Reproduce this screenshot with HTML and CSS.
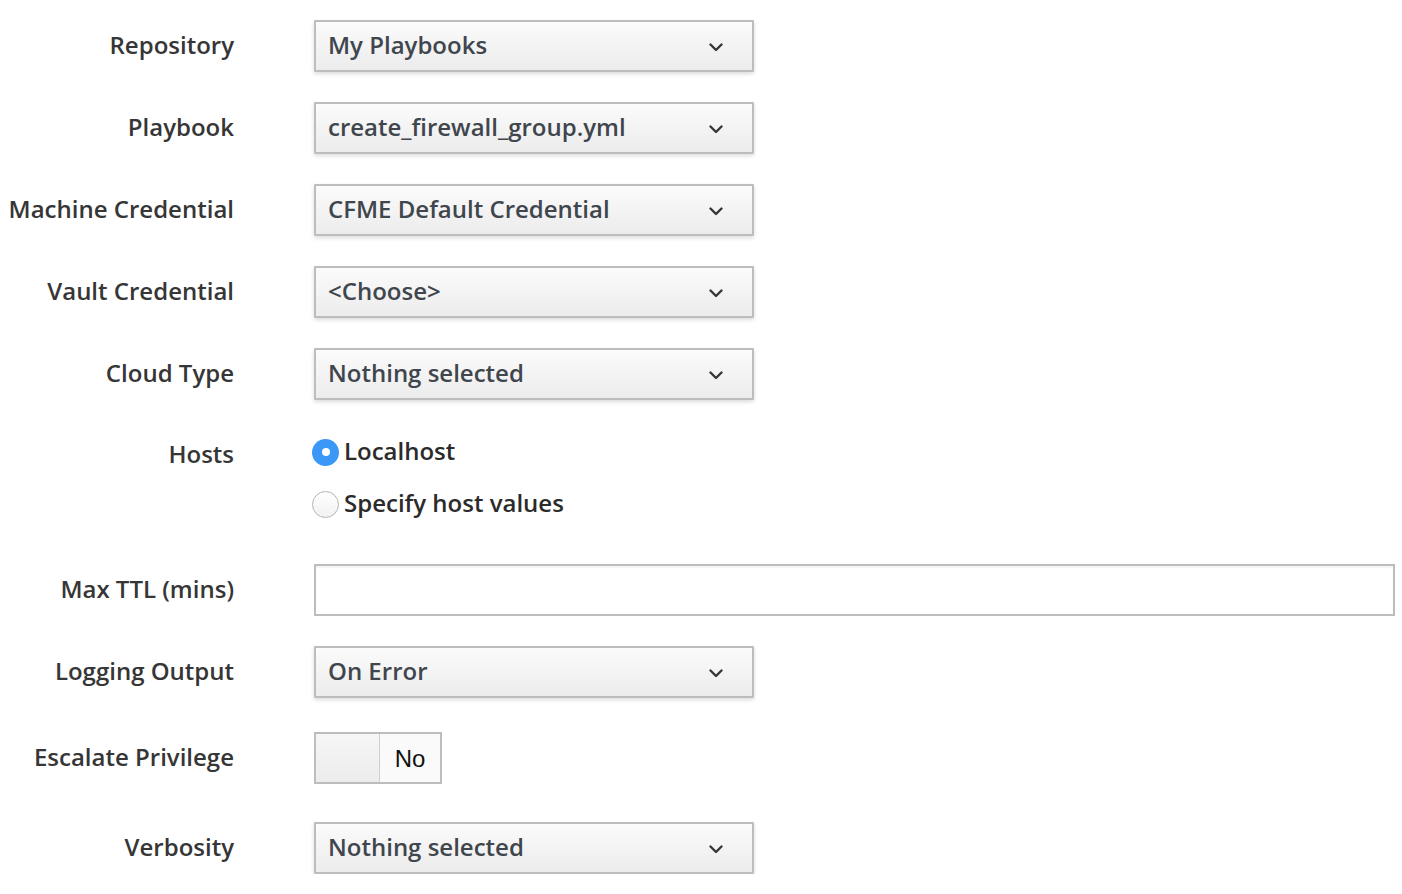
FILE: index.html
```html
<!DOCTYPE html>
<html>
<head>
<meta charset="utf-8">
<link rel="stylesheet" href="styles.css">
</head>
<body>
<form class="form">
  <div class="row">
    <label class="label">Repository</label>
    <div class="select"><span>My Playbooks</span><svg class="chev" viewBox="0 0 14 9"><path d="M1.5 1.5 L7 7 L12.5 1.5"/></svg></div>
  </div>
  <div class="row">
    <label class="label">Playbook</label>
    <div class="select"><span>create_firewall_group.yml</span><svg class="chev" viewBox="0 0 14 9"><path d="M1.5 1.5 L7 7 L12.5 1.5"/></svg></div>
  </div>
  <div class="row">
    <label class="label">Machine Credential</label>
    <div class="select"><span>CFME Default Credential</span><svg class="chev" viewBox="0 0 14 9"><path d="M1.5 1.5 L7 7 L12.5 1.5"/></svg></div>
  </div>
  <div class="row">
    <label class="label">Vault Credential</label>
    <div class="select"><span>&lt;Choose&gt;</span><svg class="chev" viewBox="0 0 14 9"><path d="M1.5 1.5 L7 7 L12.5 1.5"/></svg></div>
  </div>
  <div class="row">
    <label class="label">Cloud Type</label>
    <div class="select"><span>Nothing selected</span><svg class="chev" viewBox="0 0 14 9"><path d="M1.5 1.5 L7 7 L12.5 1.5"/></svg></div>
  </div>
  <div class="row row-hosts">
    <label class="label label-hosts">Hosts</label>
    <div class="radios">
      <div class="radio-line"><span class="radio checked"></span><span>Localhost</span></div>
      <div class="radio-line"><span class="radio"></span><span>Specify host values</span></div>
    </div>
  </div>
  <div class="row row-ttl">
    <label class="label">Max TTL (mins)</label>
    <div class="input"></div>
  </div>
  <div class="row">
    <label class="label">Logging Output</label>
    <div class="select"><span>On Error</span><svg class="chev" viewBox="0 0 14 9"><path d="M1.5 1.5 L7 7 L12.5 1.5"/></svg></div>
  </div>
  <div class="row row-esc">
    <label class="label">Escalate Privilege</label>
    <div class="toggle"><span class="knob"></span><span class="toggle-text">No</span></div>
  </div>
  <div class="row row-verb">
    <label class="label">Verbosity</label>
    <div class="select"><span>Nothing selected</span><svg class="chev" viewBox="0 0 14 9"><path d="M1.5 1.5 L7 7 L12.5 1.5"/></svg></div>
  </div>
</form>
</body>
</html>
```
FILE: styles.css
```css
html, body {
  margin: 0;
  padding: 0;
  background: #ffffff;
}
body {
  font-family: "Open Sans", "Liberation Sans", sans-serif;
  font-weight: 600;
  font-size: 24px;
  color: #363636;
}
.form {
  padding: 20px 7px 0 0;
  display: flex;
  flex-direction: column;
  gap: 30px;
}
.row {
  display: grid;
  grid-template-columns: 234px 1fr;
  column-gap: 80px;
  align-items: center;
}
.label {
  text-align: right;
  white-space: nowrap;
  line-height: 48px;
  padding-bottom: 2px;
}
.select {
  box-sizing: border-box;
  width: 440px;
  height: 52px;
  border: 2px solid #bdbdbd;
  border-radius: 1px;
  background: linear-gradient(#fbfbfb, #ececec);
  box-shadow: 0 2px 4px rgba(0, 0, 0, 0.14);
  display: flex;
  align-items: center;
  justify-content: space-between;
  padding: 0 29px 4px 12px;
  color: #40464d;
}
.chev {
  width: 14px;
  height: 9px;
  fill: none;
  stroke: #363636;
  stroke-width: 2.4;
  stroke-linecap: round;
  stroke-linejoin: round;
  margin-top: 6px;
}
.row-hosts {
  align-items: start;
}
.label-hosts {
  margin-top: 0;
}
.radios {
  display: flex;
  flex-direction: column;
  margin: -4px 0 4px -2px;
}
.radio-line {
  display: flex;
  align-items: center;
  gap: 5px;
  height: 52px;
  color: #2b2b2b;
}
.radio-line span:last-child {
  margin-top: -3px;
}
.radio {
  box-sizing: border-box;
  width: 27px;
  height: 27px;
  border-radius: 50%;
  border: 1px solid #b4b4b4;
  background: linear-gradient(#ffffff, #f1f1f1);
  display: flex;
  align-items: center;
  justify-content: center;
}
.radio.checked {
  border: none;
  background: #3b98f7;
}
.radio.checked::after {
  content: "";
  width: 8px;
  height: 8px;
  border-radius: 50%;
  background: #ffffff;
}
.input {
  box-sizing: border-box;
  height: 52px;
  border: 2px solid #bdbdbd;
  background: #fff;
  box-shadow: inset 0 2px 2px rgba(0, 0, 0, 0.05);
}
.row-esc {
  margin-top: 4px;
}
.toggle {
  box-sizing: border-box;
  width: 128px;
  height: 52px;
  border: 2px solid #bdbdbd;
  display: flex;
  background: #fafafa;
}
.knob {
  width: 63px;
  background: linear-gradient(#f6f6f6, #ececec);
  border-right: 1px solid #cfcfcf;
}
.toggle-text {
  flex: 1;
  display: flex;
  align-items: center;
  justify-content: center;
  font-family: "Liberation Sans", Arial, sans-serif;
  font-weight: 400;
  font-size: 24px;
  color: #111;
  padding-left: 2px;
  padding-right: 2px;
  padding-top: 2px;
}
.row-verb {
  margin-top: 8px;
}
```
